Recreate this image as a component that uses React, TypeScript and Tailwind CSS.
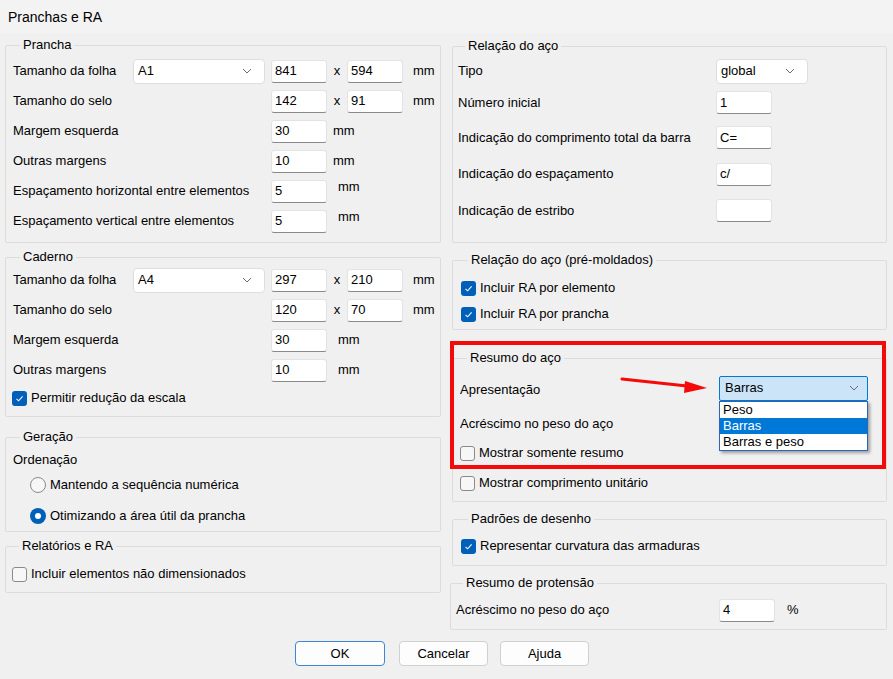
import React from "react";

type Kids = { children?: React.ReactNode };

function Chevron() {
  return (
    <svg width="10" height="6" viewBox="0 0 10 6" className="shrink-0">
      <path d="M1 1 L5 5 L9 1" fill="none" stroke="#6b6b6b" strokeWidth="1" />
    </svg>
  );
}

// Win11 style text box
function Box({ value = "", w = "w-[56px]" }: { value?: string; w?: string }) {
  return (
    <div
      className={`${w} h-[23px] shrink-0 bg-white border border-[#e3e3e3] border-b-[#8a8a8a] rounded-[3px] pl-[3px] flex items-center`}
    >
      {value}
    </div>
  );
}

function Select({ value, w }: { value: string; w: string }) {
  return (
    <div
      className={`${w} h-[25px] shrink-0 bg-white border border-[#dedede] rounded-[4px] pl-[4px] pr-[12px] flex items-center justify-between`}
    >
      <span>{value}</span>
      <Chevron />
    </div>
  );
}

function Check({ checked, label }: { checked?: boolean; label: string }) {
  return (
    <div className="flex items-center gap-[4px]">
      {checked ? (
        <div className="w-[15px] h-[15px] rounded-[3px] bg-[#005fb8] flex items-center justify-center">
          <svg width="11" height="11" viewBox="0 0 11 11">
            <path d="M2.5 5.8 L4.6 7.8 L8.6 3.4" fill="none" stroke="#ffffff" strokeWidth="1.1" />
          </svg>
        </div>
      ) : (
        <div className="w-[15px] h-[15px] rounded-[3px] border border-[#8a8a8a] bg-[#f7f7f7]" />
      )}
      <span>{label}</span>
    </div>
  );
}

function Radio({ checked, label }: { checked?: boolean; label: string }) {
  return (
    <div className="flex items-center gap-[4px]">
      {checked ? (
        <div className="w-[16px] h-[16px] rounded-full bg-[#005fb8] flex items-center justify-center">
          <div className="w-[6px] h-[6px] rounded-full bg-white" />
        </div>
      ) : (
        <div className="w-[16px] h-[16px] rounded-full border border-[#8a8a8a] bg-[#f7f7f7]" />
      )}
      <span>{label}</span>
    </div>
  );
}

function Group({ title, className = "", children }: Kids & { title: string; className?: string }) {
  return (
    <fieldset className={`border border-[#dcdcdc] rounded-[2px] ${className}`}>
      <legend className="ml-[7px] px-[3px] leading-[16px]">{title}</legend>
      {children}
    </fieldset>
  );
}

function Btn({ label, primary }: { label: string; primary?: boolean }) {
  return (
    <div
      className={`h-[25px] bg-[#fdfdfd] rounded-[4px] border flex items-center justify-center ${
        primary ? "w-[90px] border-[#3b86d6]" : "w-[89px] border-[#d0d0d0]"
      }`}
    >
      {label}
    </div>
  );
}

export default function App() {
  return (
    <div className="w-[893px] h-[679px] bg-[#f0f0f0] text-black text-[13px] leading-[16px] font-['Liberation_Sans',Arial,sans-serif] overflow-hidden">
      {/* Title bar */}
      <div className="h-[33px] bg-[#f3f3f3] pl-[8px] flex items-center text-[14px]">Pranchas e RA</div>

      <div className="flex pl-[5px]">
        {/* Left column */}
        <div className="w-[436px] flex flex-col">
          <Group title="Prancha" className="mt-[4px] pt-[3px] pb-[6px] pl-[7px]">
            <div className="flex items-center h-[30px]">
              <div className="w-[120px]">Tamanho da folha</div>
              <Select value="A1" w="w-[132px]" />
              <div className="w-[6px]" />
              <Box value="841" />
              <div className="w-[20px] text-center">x</div>
              <Box value="594" />
              <div className="ml-[10px]">mm</div>
            </div>
            <div className="flex items-center h-[30px]">
              <div className="w-[258px]">Tamanho do selo</div>
              <Box value="142" />
              <div className="w-[20px] text-center">x</div>
              <Box value="91" />
              <div className="ml-[10px]">mm</div>
            </div>
            <div className="flex items-center h-[30px]">
              <div className="w-[258px]">Margem esquerda</div>
              <Box value="30" />
              <div className="ml-[6px]">mm</div>
            </div>
            <div className="flex items-center h-[30px]">
              <div className="w-[258px]">Outras margens</div>
              <Box value="10" />
              <div className="ml-[6px]">mm</div>
            </div>
            <div className="flex items-center h-[30px]">
              <div className="w-[258px]">Espaçamento horizontal entre elementos</div>
              <Box value="5" />
              <div className="ml-[11px] mb-[8px]">mm</div>
            </div>
            <div className="flex items-center h-[30px]">
              <div className="w-[258px]">Espaçamento vertical entre elementos</div>
              <Box value="5" />
              <div className="ml-[11px] mb-[8px]">mm</div>
            </div>
          </Group>

          <Group title="Caderno" className="mt-[6px] pb-[5px] pl-[7px]">
            <div className="flex items-center h-[30px]">
              <div className="w-[120px]">Tamanho da folha</div>
              <Select value="A4" w="w-[132px]" />
              <div className="w-[6px]" />
              <Box value="297" />
              <div className="w-[20px] text-center">x</div>
              <Box value="210" />
              <div className="ml-[10px]">mm</div>
            </div>
            <div className="flex items-center h-[30px]">
              <div className="w-[258px]">Tamanho do selo</div>
              <Box value="120" />
              <div className="w-[20px] text-center">x</div>
              <Box value="70" />
              <div className="ml-[10px]">mm</div>
            </div>
            <div className="flex items-center h-[30px]">
              <div className="w-[258px]">Margem esquerda</div>
              <Box value="30" />
              <div className="ml-[11px]">mm</div>
            </div>
            <div className="flex items-center h-[30px]">
              <div className="w-[258px]">Outras margens</div>
              <Box value="10" />
              <div className="ml-[11px]">mm</div>
            </div>
            <div className="flex items-center h-[26px] -ml-[1px]">
              <Check checked label="Permitir redução da escala" />
            </div>
          </Group>

          <Group title="Geração" className="mt-[12px] pt-[3px] pb-[3px] pl-[7px]">
            <div className="flex items-center h-[24px]">Ordenação</div>
            <div className="flex items-center h-[24px] mt-[1px] pl-[17px]">
              <Radio label="Mantendo a sequência numérica" />
            </div>
            <div className="flex items-center h-[24px] mt-[7px] pl-[17px]">
              <Radio checked label="Otimizando a área útil da prancha" />
            </div>
          </Group>

          <Group title="Relatórios e RA" className="mt-[6px] pt-[7px] pb-[5px] pl-[6px]">
            <div className="flex items-center h-[26px]">
              <Check label="Incluir elementos não dimensionados" />
            </div>
          </Group>
        </div>

        {/* Right column */}
        <div className="w-[435px] ml-[11px] flex flex-col">
          <Group title="Relação do aço" className="mt-[5px] pt-[2px] pb-[13px] pl-[5px]">
            <div className="flex items-center h-[30px]">
              <div className="w-[258px]">Tipo</div>
              <Select value="global" w="w-[92px]" />
            </div>
            <div className="flex items-center h-[33px]">
              <div className="w-[258px]">Número inicial</div>
              <Box value="1" />
            </div>
            <div className="flex items-center h-[37px]">
              <div className="w-[258px]">Indicação do comprimento total da barra</div>
              <Box value=" C=" />
            </div>
            <div className="flex items-center h-[36px]">
              <div className="w-[258px]">Indicação do espaçamento</div>
              <Box value="c/" />
            </div>
            <div className="flex items-center h-[37px]">
              <div className="w-[258px]">Indicação de estribo</div>
              <Box value="" />
            </div>
          </Group>

          <Group title="Relação do aço (pré-moldados)" className="mt-[9px] pt-[8px] pb-[3px] pl-[8px] flex flex-col gap-[2px]">
            <div className="flex items-center h-[24px]">
              <Check checked label="Incluir RA por elemento" />
            </div>
            <div className="flex items-center h-[24px]">
              <Check checked label="Incluir RA por prancha" />
            </div>
          </Group>

          <div className="relative mt-[20px]">
            <Group title="Resumo do aço" className="pt-[8px] pb-[6px] pl-[7px]">
              <div className="flex items-center h-[28px]">
                <div className="w-[259px] pt-[4px]">Apresentação</div>
                <div className="w-[149px] h-[25px] bg-[#cce4f7] border border-[#0078d7] rounded-[2px] pl-[5px] pr-[8px] flex items-center justify-between">
                  <span>Barras</span>
                  <Chevron />
                </div>
              </div>
              <div className="flex items-center h-[28px] mt-[8px]">Acréscimo no peso do aço</div>
              <div className="flex items-center h-[24px] mt-[3px]">
                <Check label="Mostrar somente resumo" />
              </div>
              <div className="flex items-center h-[24px] mt-[6px]">
                <Check label="Mostrar comprimento unitário" />
              </div>
            </Group>

            {/* open dropdown list */}
            <div className="absolute left-[267px] top-[51px] w-[149px] h-[50px] bg-white border border-[#2f66b3] shadow-[2px_2px_3px_rgba(0,0,0,0.35)] flex flex-col">
              <div className="h-[16px] pl-[3px] flex items-center">Peso</div>
              <div className="h-[16px] pl-[3px] flex items-center bg-[#0078d7] text-white">Barras</div>
              <div className="h-[16px] pl-[3px] flex items-center">Barras e peso</div>
            </div>

            {/* red annotation */}
            <div className="absolute -left-[2px] -top-[9px] w-[436px] h-[128px] border-4 border-[#f50a0a] pointer-events-none" />
            <svg className="absolute left-[163px] top-[24px]" width="96" height="24" viewBox="0 0 96 24">
              <path d="M7 5 L72 12" stroke="#f50a0a" strokeWidth="3" strokeLinecap="round" />
              <polygon points="70,7 69,19 92,14" fill="#f50a0a" />
            </svg>
          </div>

          <Group title="Padrões de desenho" className="mt-[9px] pt-[6px] pb-[6px] pl-[8px]">
            <div className="flex items-center h-[26px]">
              <Check checked label="Representar curvatura das armaduras" />
            </div>
          </Group>

          <Group title="Resumo de protensão" className="mt-[9px] -ml-[2px] pt-[5px] pb-[5px] pl-[5px]">
            <div className="flex items-center h-[28px]">
              <div className="w-[263px]">Acréscimo no peso do aço</div>
              <Box value="4" />
              <div className="ml-[12px]">%</div>
            </div>
          </Group>
        </div>
      </div>

      {/* Buttons */}
      <div className="flex mt-[11px] pl-[295px]">
        <Btn primary label="OK" />
        <div className="ml-[14px]">
          <Btn label="Cancelar" />
        </div>
        <div className="ml-[12px]">
          <Btn label="Ajuda" />
        </div>
      </div>
    </div>
  );
}
